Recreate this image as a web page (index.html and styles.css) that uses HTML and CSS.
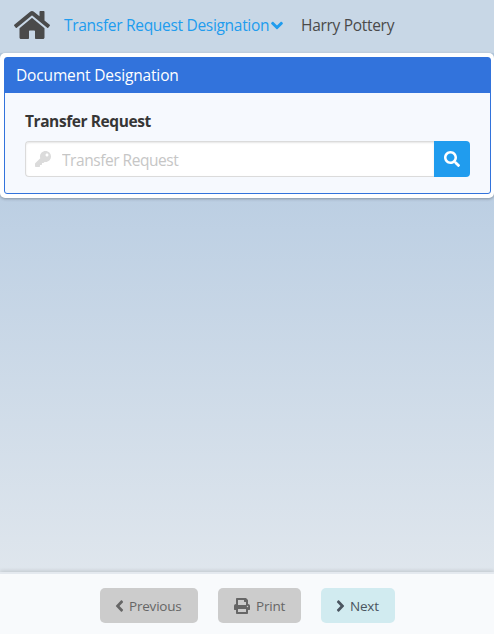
FILE: index.html
```html
<!DOCTYPE html>
<html lang="en">
<head>
<meta charset="utf-8">
<title>Document Designation</title>
<link rel="stylesheet" href="styles.css">
</head>
<body>
<nav class="navbar">
  <svg class="home" viewBox="0 0 576 512"><path d="M488 312.700V456c0 13.300-10.700 24-24 24H348c-6.600 0-12-5.400-12-12V356c0-6.600-5.400-12-12-12h-72c-6.600 0-12 5.400-12 12v112c0 6.600-5.400 12-12 12H112c-13.300 0-24-10.700-24-24V312.700c0-3.600 1.600-7 4.400-9.300l188-154.800c4.400-3.600 10.800-3.600 15.300 0l188 154.800c2.700 2.300 4.300 5.700 4.300 9.300zm83.600-60.900L488 182.900V44.400c0-6.600-5.400-12-12-12h-56c-6.600 0-12 5.400-12 12V117l-89.500-73.700c-17.700-14.600-43.300-14.600-61 0L4.400 251.800c-5.100 4.200-5.800 11.800-1.600 16.900l25.500 31c4.200 5.100 11.800 5.800 16.900 1.600l235.200-193.700c4.400-3.600 10.800-3.600 15.300 0l235.200 193.700c5.100 4.200 12.700 3.500 16.900-1.600l25.500-31c4.200-5.200 3.400-12.700-1.700-16.900z"/></svg>
  <a class="menu-link"><span class="menu-text">Transfer Request Designation</span><svg class="caret" viewBox="0 0 256 512"><path d="M31.700 239l136-136c9.400-9.400 24.600-9.400 33.900 0l22.600 22.600c9.400 9.400 9.400 24.600 0 33.900L127.900 256l96.400 96.400c9.400 9.400 9.400 24.600 0 33.900L201.700 409c-9.400 9.400-24.600 9.400-33.900 0l-136-136c-9.500-9.400-9.500-24.600-.1-34z"/></svg></a>
  <a class="user">Harry Pottery</a>
</nav>
<main class="card">
  <section class="panel">
    <h1 class="panel-title"><span>Document Designation</span></h1>
    <div class="panel-body">
      <label class="label" for="request"><span>Transfer Request</span></label>
      <div class="field">
        <div class="control">
          <svg class="key" viewBox="0 0 512 512"><path d="M512 176c0 97.200-78.800 176-176 176-11.220 0-22.190-1.060-32.830-3.070l-24.010 27.010A24 24 0 0 1 261.220 384H224v40c0 13.250-10.750 24-24 24h-40v40c0 13.250-10.750 24-24 24H24c-13.250 0-24-10.750-24-24v-78.060c0-6.360 2.530-12.470 7.030-16.970l161.800-161.800C163.110 213.810 160 195.270 160 176 160 78.800 238.800 0 336 0c97.490 0 176 78.510 176 176zM336 128c0 26.510 21.490 48 48 48s48-21.490 48-48-21.490-48-48-48-48 21.490-48 48z"/></svg>
          <input class="input" id="request" type="text" placeholder="Transfer Request">
        </div>
        <button class="search" aria-label="Search"><svg viewBox="0 0 512 512"><path d="M505 442.700L405.300 343c-4.500-4.500-10.600-7-17-7H372c27.600-35.300 44-79.700 44-128C416 93.100 322.900 0 208 0S0 93.100 0 208s93.100 208 208 208c48.300 0 92.700-16.400 128-44v16.300c0 6.400 2.500 12.500 7 17l99.700 99.700c9.400 9.400 24.600 9.400 33.900 0l28.300-28.300c9.400-9.400 9.400-24.600.1-34zM208 336c-70.700 0-128-57.200-128-128 0-70.700 57.200-128 128-128 70.700 0 128 57.200 128 128 0 70.700-57.200 128-128 128z"/></svg></button>
      </div>
    </div>
  </section>
</main>
<footer class="footer">
  <button class="btn previous"><svg class="angle" viewBox="0 0 256 512"><path d="M31.700 239l136-136c9.400-9.400 24.600-9.400 33.900 0l22.600 22.600c9.400 9.400 9.400 24.600 0 33.900L127.900 256l96.400 96.400c9.400 9.400 9.400 24.600 0 33.900L201.700 409c-9.400 9.400-24.600 9.400-33.900 0l-136-136c-9.500-9.400-9.500-24.600-.1-34z"/></svg><span>Previous</span></button>
  <button class="btn print"><svg class="printer" viewBox="0 0 512 512"><path d="M448 192V77.250c0-8.490-3.370-16.620-9.370-22.630L393.370 9.370c-6-6-14.140-9.370-22.630-9.370H96C78.330 0 64 14.330 64 32v160c-35.350 0-64 28.650-64 64v112c0 8.840 7.160 16 16 16h48v96c0 17.670 14.330 32 32 32h320c17.670 0 32-14.330 32-32v-96h48c8.840 0 16-7.160 16-16V256c0-35.350-28.650-64-64-64zm-64 256H128v-96h256v96zm0-224H128V64h192v48c0 8.840 7.160 16 16 16h48v96zm48 72c-13.250 0-24-10.750-24-24 0-13.260 10.750-24 24-24s24 10.740 24 24c0 13.250-10.750 24-24 24z"/></svg><span>Print</span></button>
  <button class="btn next"><svg class="angle" viewBox="0 0 256 512"><path d="M31.700 239l136-136c9.400-9.400 24.600-9.400 33.900 0l22.600 22.600c9.400 9.400 9.400 24.600 0 33.900L127.900 256l96.400 96.400c9.400 9.400 9.400 24.600 0 33.900L201.700 409c-9.400 9.400-24.600 9.400-33.900 0l-136-136c-9.500-9.400-9.500-24.600-.1-34z"/></svg><span>Next</span></button>
</footer>
</body>
</html>
```

FILE: styles.css
```css
* { box-sizing: border-box; }
body {
  margin: 0;
  height: 634px;
  overflow: hidden;
  display: flex;
  flex-direction: column;
  font: 15.5px/24px "Open Sans", "Noto Sans", sans-serif;
  letter-spacing: -0.3px;
  color: #4a4a4a;
  background: linear-gradient(#b5cbe1 53px, #bccfe3 198px, #dfe6ed 571px);
}
svg { fill: currentColor; flex: none; display: block; }
.navbar {
  height: 53px;
  flex: none;
  display: flex;
  align-items: flex-start;
  padding: 13px 14px 0;
  background: #c8d7e6;
}
.home { width: 36px; height: 32px; margin: -4px 14px 0 0; }
.menu-link { display: flex; width: 237px; color: #209cee; }
.menu-text { width: 207px; white-space: nowrap; }
.caret { width: 10px; height: 19px; margin: 3px 0 0 1px; transform: rotate(-90deg); }
.user { white-space: nowrap; }
.card {
  height: 145px;
  flex: none;
  padding: 4px 3px 4px 4px;
  background: #fff;
  border-radius: 5px;
  box-shadow: 0 1px 3px rgba(10, 10, 10, .3);
}
.panel {
  height: 137px;
  border: 1px solid #3273dc;
  border-radius: 3px;
  background: #f6f9fe;
}
.panel-title {
  margin: 0;
  height: 35px;
  padding: 5px 11px;
  font-size: 15.5px;
  font-weight: 400;
  letter-spacing: -0.15px;
  color: #fff;
  background: #3273dc;
}
.panel-body { padding: 16px 20px; }
.label { display: block; height: 24px; margin-bottom: 8px; font-weight: 700; letter-spacing: -0.42px; color: #363636; }
.field { display: flex; height: 36px; }
.control {
  flex: 1;
  display: flex;
  align-items: center;
  border: 1px solid #dbdbdb;
  border-right: 0;
  border-radius: 4px 0 0 4px;
  background: #fff;
  box-shadow: inset 0 1px 2px rgba(10, 10, 10, .1);
}
.key { width: 16px; height: 16px; margin: 0 11px 0 9px; color: #dbdbdb; }
.input {
  flex: 1;
  min-width: 0;
  height: 34px;
  padding: 2px 0 0;
  border: 0;
  outline: 0;
  background: none;
  font: inherit;
  letter-spacing: -0.45px;
}
.input::placeholder { color: #c6c6c6; opacity: 1; }
.search {
  width: 36px;
  padding: 0 10px;
  border: 0;
  border-radius: 0 4px 4px 0;
  color: #fff;
  background: #209cee;
}
.search svg { width: 16px; height: 16px; }
.footer {
  margin-top: auto;
  height: 62px;
  flex: none;
  display: flex;
  justify-content: center;
  gap: 20px;
  padding: 14px 0 0 1px;
  border-top: 2px solid #e4e9ef;
  background: #f8fafc;
  box-shadow: 0 -1px 4px rgba(10, 10, 10, .15);
}
.btn {
  height: 35px;
  display: flex;
  align-items: center;
  padding: 0 0 0 15px;
  border: 0;
  border-radius: 5px;
  font: 13.5px/21px "Open Sans", "Noto Sans", sans-serif;
  letter-spacing: -0.2px;
  color: #666;
  background: #ccc;
}
.btn span { padding-top: 1px; }
.previous { width: 98px; }
.print { width: 83px; }
.next { width: 74px; color: #4a5560; background: #d1ebf0; }
.angle { width: 9px; height: 18px; margin: 0 5px 0 0; }
.next .angle { transform: scaleX(-1); }
.printer { width: 16px; height: 16px; margin: 0 6px 0 1px; }
```
